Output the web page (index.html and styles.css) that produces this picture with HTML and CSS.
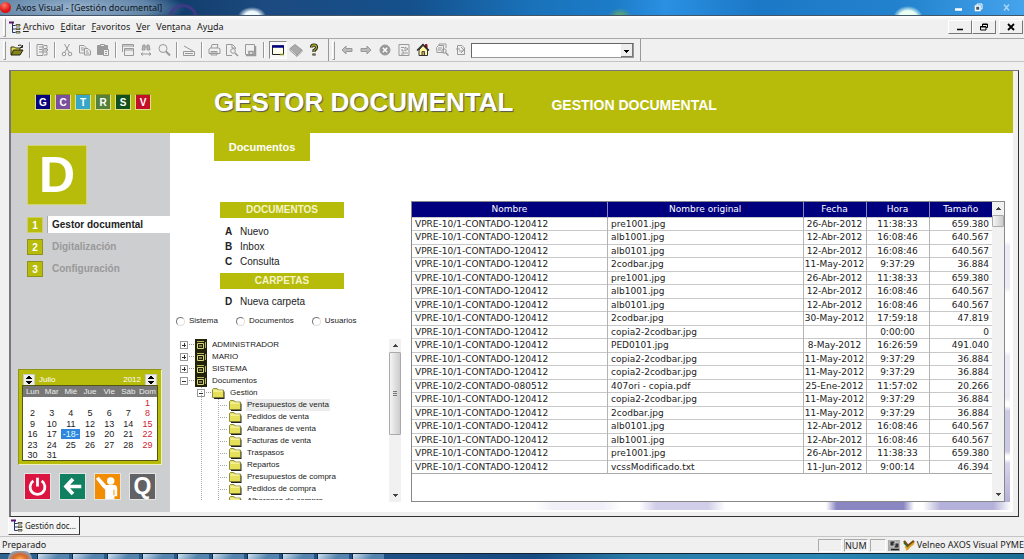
FILE: index.html
```
<!DOCTYPE html>
<html lang="es">
<head>
<meta charset="utf-8">
<title>Axos Visual - [Gestión documental]</title>
<link rel="stylesheet" href="styles.css">
</head>
<body>
<svg class="defs" width="0" height="0" aria-hidden="true">
  <symbol id="app-tree" viewBox="0 0 13 13"><path d="M1 1.500h5" stroke="#5a1070" stroke-width="2"/><path d="M4.500 2v9.500h3M4.500 4.500h3M4.500 8h3" stroke="#24346e" fill="none"/><path d="M8 3.500h4v1.500H8zM8 7h4v1.500H8zM8 10.500h4V12H8z" fill="#f4e98c" stroke="#222" stroke-width=".7"/></symbol>
  <symbol id="cabinet" viewBox="0 0 12 12"><path d="M0 0h12v12H0z" fill="#22220c"/><path d="M2.500 4.500h6v5h-6zM4 7h3" fill="none" stroke="#d8d87c"/><path d="M2 2.500h7M10.500 3v6" fill="none" stroke="#b8b860"/></symbol>
  <symbol id="folder" viewBox="0 0 13 11"><path d="M2 2.500h4l1 1h5.500V11H2z" fill="#222"/><path d="M.5 1.500L1.500.500h3.500l1 1.500h5.500V9.500H.5z" fill="#e6e05a" stroke="#77772a" stroke-width=".8"/><path d="M1.500 3h9" stroke="#ffffc0"/></symbol>
</svg>

<header class="titlebar">
  <span class="app-dot"></span>
  <h1 class="titlebar-text">Axos Visual - [Gestión documental]</h1>
  <div class="aero-buttons">
    <button type="button" aria-label="Minimizar"><svg width="9" height="9" viewBox="0 0 9 9"><path d="M1 6.500h7" stroke="#fff" stroke-width="2.500"/></svg></button>
    <button type="button" aria-label="Restaurar"><svg width="9" height="9" viewBox="0 0 9 9"><path d="M3 2V1h5v5H7" fill="none" stroke="#fff"/><path d="M1.500 3h4.500v4.500H1.500z" fill="#456" stroke="#fff" stroke-width="1.500"/></svg></button>
    <button type="button" aria-label="Cerrar"><svg width="9" height="9" viewBox="0 0 9 9"><path d="M2 1.500l5 6M7 1.500l-5 6" stroke="#a8d4f4" stroke-width="1.500"/></svg></button>
  </div>
</header>

<nav class="menubar" aria-label="Menú principal">
  <span class="grip"></span>
  <svg class="menu-logo" width="13" height="13"><use href="#app-tree"/></svg>
  <button type="button"><u>A</u>rchivo</button>
  <button type="button"><u>E</u>ditar</button>
  <button type="button"><u>F</u>avoritos</button>
  <button type="button"><u>V</u>er</button>
  <button type="button">Ven<u>t</u>ana</button>
  <button type="button">Ay<u>u</u>da</button>
  <div class="mdi-buttons">
    <button type="button" aria-label="Minimizar ventana"><svg width="10" height="8" viewBox="0 0 10 8"><path d="M2 6.500h6" stroke="#000" stroke-width="1.500"/></svg></button>
    <button type="button" aria-label="Restaurar ventana"><svg width="10" height="8" viewBox="0 0 10 8"><path d="M3.500 3V1h5v3.500H7M3.500 1.500h5M1.500 3.500H7V7H1.500zM1.500 4H7" fill="none" stroke="#000"/></svg></button>
    <button type="button" aria-label="Cerrar ventana"><svg width="10" height="8" viewBox="0 0 10 8"><path d="M2 1l6 6M8 1L2 7" stroke="#000" stroke-width="1.800"/></svg></button>
  </div>
</nav>

<div class="toolbar" role="toolbar" aria-label="Herramientas">
  <div class="tool-group tool-main">
    <span class="grip"></span>
    <button type="button" aria-label="Abrir"><svg viewBox="0 0 14 14"><path d="M1 11.500V4h3.500l1 1H10v2" fill="#e8e060" stroke="#33330a"/><path d="M1 12l2.500-5H13l-3 5z" fill="#85851c" stroke="#22220a"/><path d="M8 2.500q3-2 4 1.500M12.500 2v2.500H10" fill="none" stroke="#222"/></svg></button>
    <span class="sep"></span>
    <button type="button" aria-label="Árbol"><svg viewBox="0 0 14 14"><path d="M2 1.500h6v11H2zM4 4h5M4 6.500h3M4 9h5M9 2.500h3v3H9M9 9h3v3H9M7 7h6M11 5l2 2-2 2"/></svg></button>
    <span class="sep"></span>
    <button type="button" aria-label="Cortar"><svg viewBox="0 0 14 14"><path d="M4.500 1l4.500 8M9.500 1L5 9"/><circle cx="4" cy="11" r="1.800"/><circle cx="10" cy="11" r="1.800"/></svg></button>
    <button type="button" aria-label="Copiar"><svg viewBox="0 0 14 14"><path d="M1.500 2.500H6l2 2V10H1.500zM3 5h3M3 7h3"/><path d="M6.500 5.500H10l2.500 2.500v4h-6z" fill="#eee"/><path d="M8 8h2M8 10h3"/></svg></button>
    <button type="button" aria-label="Pegar"><svg viewBox="0 0 14 14"><path d="M1.500 2.500h10v9h-10z" fill="#999"/><path d="M4.500 1.500h4v2h-4z" fill="#eee"/><path d="M7.500 6.500h5v6h-5zM9 8.500h2M9 10.500h2" fill="#eee"/></svg></button>
    <span class="sep"></span>
    <button type="button" aria-label="Ventanas"><svg viewBox="0 0 14 14"><path d="M1.500 9V1.500h11V4M1.500 3h11"/><path d="M3.500 5.500h9v7h-9zM3.500 7h9" fill="#eee"/></svg></button>
    <button type="button" aria-label="Buscar"><svg viewBox="0 0 14 14"><path d="M3 7l1-5h2v5H3M8 7V2h2l1 5zM6 4h2" fill="#bbb"/><path d="M2 11h10M4 9.500L2 11l2 1.500M10 9.500l2 1.500-2 1.500"/></svg></button>
    <button type="button" aria-label="Zoom"><svg viewBox="0 0 14 14"><circle cx="6" cy="5.500" r="4"/><path d="M9 8.500l4 4" stroke-width="2"/></svg></button>
    <span class="sep"></span>
    <button type="button" aria-label="Escáner"><svg viewBox="0 0 14 14"><path d="M1.500 8.500h11v4h-11zM3 10.500h8M2 3l9 5"/></svg></button>
    <span class="sep"></span>
    <button type="button" aria-label="Imprimir"><svg viewBox="0 0 14 14"><path d="M4 5l1-3.500h6L10 5M2 6l1.500-1H12l1 1v4.500H2zM4 8.500h6V12H4zM5 10h4"/></svg></button>
    <button type="button" aria-label="Vista previa"><svg viewBox="0 0 14 14"><path d="M7 12.500H1.500v-11h6l3 3V6M7 2v3h3"/><circle cx="8" cy="8" r="2.300"/><path d="M10 10l3 3" stroke-width="1.600"/></svg></button>
    <button type="button" aria-label="Configurar página"><svg viewBox="0 0 14 14"><path d="M2.500 1.500h9v10h-9z"/><path d="M3 12.500h9.500V3M6 8.500h4v3H6z" fill="none" stroke-width="1.500"/></svg></button>
    <span class="sep double"></span>
    <button type="button" class="pressed" aria-label="Ventana" aria-pressed="true"><svg viewBox="0 0 14 14"><path d="M1.500 3h11v8.500h-11z" fill="#fffff0" stroke="#222"/><path d="M1 3.500h12" stroke="#000080" stroke-width="2.500"/><path d="M9 11.500h4" stroke="#8a8a10" stroke-width="1.500"/></svg></button>
    <button type="button" aria-label="Libro"><svg viewBox="0 0 14 14"><path d="M1 5.500L6 1.500l7 5.500-5 5z" fill="#aaa"/><path d="M1 5.500v2l7 6 5-5V7M8 12v1"/></svg></button>
    <button type="button" aria-label="Ayuda"><svg viewBox="0 0 14 14"><path d="M4.500 4.500q0-2.500 2.500-2.500t2.500 2.500q0 1.500-2.500 3V9M7 10.500v2" fill="none" stroke="#222" stroke-width="3.200"/><path d="M4.500 4.500q0-2.500 2.500-2.500t2.500 2.500q0 1.500-2.500 3V9M7 11v1" fill="none" stroke="#a8a820" stroke-width="1.300"/></svg></button>
  </div>
  <div class="tool-group tool-nav">
    <span class="grip"></span>
    <button type="button" aria-label="Atrás"><svg viewBox="0 0 14 14"><path d="M2 7l4-4v2.500h6v3H6V11z" fill="#bbb"/></svg></button>
    <button type="button" aria-label="Adelante"><svg viewBox="0 0 14 14"><path d="M12 7L8 3v2.500H2v3h6V11z" fill="#bbb"/></svg></button>
    <button type="button" aria-label="Detener"><svg viewBox="0 0 14 14"><circle cx="7" cy="7" r="5" fill="#999"/><path d="M4.800 4.800l4.400 4.400M9.200 4.800L4.800 9.200" stroke="#fff" stroke-width="1.500"/></svg></button>
    <button type="button" aria-label="Actualizar"><svg viewBox="0 0 14 14"><path d="M2 1.500h10v11H2zM4 4.500h3M4 7h2v3h5M8 4v4l3-2zM4 11h3"/></svg></button>
    <button type="button" aria-label="Inicio"><svg viewBox="0 0 14 14"><path d="M9.500 4V1.500H11V5" fill="#a22" stroke="#811"/><path d="M3 7v5.500h8.500V7L7 2.500z" fill="#fff7a0" stroke="#333"/><path d="M1 7.500l6-6 6 6" fill="none" stroke="#222" stroke-width="1.300"/><path d="M6 12V8.500h2.500V12" fill="#c9a45a" stroke="#444"/></svg></button>
    <button type="button" aria-label="Buscar en carpetas"><svg viewBox="0 0 14 14"><path d="M1.500 4.500l2-2h5v7H2zM4 2V1h7v4M3 5h4M3 7h3"/><circle cx="9" cy="8" r="2.200"/><path d="M10.500 9.500l3 3" stroke-width="1.500"/></svg></button>
    <button type="button" aria-label="Documento"><svg viewBox="0 0 14 14"><path d="M3.500 2.500H8l2.500 2.500v6.500h-7zM2 6h4M5 8h4M7 4l3 3-3 3"/></svg></button>
    <select class="address" aria-label="Dirección"><option></option></select>
  </div>
</div>

<main class="mdi">
  <div class="client">
    <header class="brand">
      <div class="letters">
        <button type="button" class="l-g">G</button><button type="button" class="l-c">C</button><button type="button" class="l-t">T</button><button type="button" class="l-r">R</button><button type="button" class="l-s">S</button><button type="button" class="l-v">V</button>
      </div>
      <h2 class="brand-title">GESTOR DOCUMENTAL</h2>
      <p class="brand-sub">GESTION DOCUMENTAL</p>
    </header>
    <div class="body">
      <aside class="sidebar">
        <div class="big-d">D</div>
        <nav class="steps" aria-label="Secciones">
          <a href="#gestor" class="step active"><b>1</b><span>Gestor documental</span></a>
          <a href="#digitalizacion" class="step"><b>2</b><span>Digitalización</span></a>
          <a href="#configuracion" class="step"><b>3</b><span>Configuración</span></a>
        </nav>
        <section class="calendar" aria-label="Calendario">
          <div class="cal-head">
            <button type="button" class="spin" aria-label="Cambiar mes"></button>
            <span>Julio</span><span class="cal-year">2012</span>
            <button type="button" class="spin" aria-label="Cambiar año"></button>
          </div>
          <table class="cal-grid">
            <thead><tr><th>Lun</th><th>Mar</th><th>Mié</th><th>Jue</th><th>Vie</th><th>Sáb</th><th>Dom</th></tr></thead>
            <tbody>
              <tr><td></td><td></td><td></td><td></td><td></td><td></td><td>1</td></tr>
              <tr><td>2</td><td>3</td><td>4</td><td>5</td><td>6</td><td>7</td><td>8</td></tr>
              <tr><td>9</td><td>10</td><td>11</td><td>12</td><td>13</td><td>14</td><td>15</td></tr>
              <tr><td>16</td><td>17</td><td class="today">-18-</td><td>19</td><td>20</td><td>21</td><td>22</td></tr>
              <tr><td>23</td><td>24</td><td>25</td><td>26</td><td>27</td><td>28</td><td>29</td></tr>
              <tr><td>30</td><td>31</td><td></td><td></td><td></td><td></td><td></td></tr>
            </tbody>
          </table>
        </section>
        <div class="quick">
          <button type="button" class="q-power" aria-label="Salir"><svg viewBox="0 0 27 27"><path d="M9 7.500a8 8 0 1 0 9 0" fill="none" stroke="#fff" stroke-width="3"/><path d="M13.500 4v9.500" stroke="#fff" stroke-width="3"/></svg></button>
          <button type="button" class="q-back" aria-label="Volver"><svg viewBox="0 0 27 27"><path d="M14 5.500L6.500 13.500l7.500 8M7 13.500h16" fill="none" stroke="#fff" stroke-width="4"/></svg></button>
          <button type="button" class="q-user" aria-label="Usuario"><svg viewBox="0 0 27 27"><circle cx="17" cy="7.500" r="4" fill="#fff"/><path d="M1 5l3-2 8 9h9q3 0 3 4v8h-3v3H11v-10L8 14z" fill="#fff"/><path d="M20.500 17v6" stroke="#f28c00"/></svg></button>
          <button type="button" class="q-q" aria-label="Consultas">Q</button>
        </div>
      </aside>

      <div class="work">
        <div class="tabs"><button type="button" class="tab">Documentos</button></div>
        <div class="panes">
          <section class="left-pane">
            <h3 class="bar">DOCUMENTOS</h3>
            <ul class="actions">
              <li><a href="#nuevo"><b>A</b>Nuevo</a></li>
              <li><a href="#inbox"><b>B</b>Inbox</a></li>
              <li><a href="#consulta"><b>C</b>Consulta</a></li>
            </ul>
            <h3 class="bar">CARPETAS</h3>
            <ul class="actions single">
              <li><a href="#carpeta"><b>D</b>Nueva carpeta</a></li>
            </ul>
            <div class="radios">
              <label><input type="radio" name="scope">Sistema</label>
              <label><input type="radio" name="scope">Documentos</label>
              <label><input type="radio" name="scope">Usuarios</label>
            </div>
            <div class="tree-box">
              <ul class="tree">
                <li><i class="box plus"></i><svg class="cab"><use href="#cabinet"/></svg><span>ADMINISTRADOR</span></li>
                <li><i class="box plus"></i><svg class="cab"><use href="#cabinet"/></svg><span>MARIO</span></li>
                <li><i class="box plus"></i><svg class="cab"><use href="#cabinet"/></svg><span>SISTEMA</span></li>
                <li><i class="box"></i><svg class="cab"><use href="#cabinet"/></svg><span>Documentos</span></li>
                <li class="branch"><i class="box"></i><svg class="fold"><use href="#folder"/></svg><span>Gestión</span></li>
                <li class="leaf"><svg class="fold"><use href="#folder"/></svg><span class="sel">Presupuestos de venta</span></li>
                <li class="leaf"><svg class="fold"><use href="#folder"/></svg><span>Pedidos de venta</span></li>
                <li class="leaf"><svg class="fold"><use href="#folder"/></svg><span>Albaranes de venta</span></li>
                <li class="leaf"><svg class="fold"><use href="#folder"/></svg><span>Facturas de venta</span></li>
                <li class="leaf"><svg class="fold"><use href="#folder"/></svg><span>Traspasos</span></li>
                <li class="leaf"><svg class="fold"><use href="#folder"/></svg><span>Repartos</span></li>
                <li class="leaf"><svg class="fold"><use href="#folder"/></svg><span>Presupuestos de compra</span></li>
                <li class="leaf"><svg class="fold"><use href="#folder"/></svg><span>Pedidos de compra</span></li>
                <li class="leaf"><svg class="fold"><use href="#folder"/></svg><span>Albaranes de compra</span></li>
              </ul>
              <div class="scroll"><i class="up"></i><i class="thumb thumb-tree"></i><i class="down"></i></div>
            </div>
          </section>

          <section class="grid-box">
            <div class="grid-scroll">
              <table class="files">
                <colgroup><col><col><col class="c-date"><col class="c-time"><col class="c-size"></colgroup>
                <thead><tr><th>Nombre</th><th>Nombre original</th><th>Fecha</th><th>Hora</th><th>Tamaño</th></tr></thead>
                <tbody>
                  <tr><td>VPRE-10/1-CONTADO-120412</td><td>pre1001.jpg</td><td>26-Abr-2012</td><td>11:38:33</td><td>659.380</td></tr>
                  <tr><td>VPRE-10/1-CONTADO-120412</td><td>alb1001.jpg</td><td>12-Abr-2012</td><td>16:08:46</td><td>640.567</td></tr>
                  <tr><td>VPRE-10/1-CONTADO-120412</td><td>alb0101.jpg</td><td>12-Abr-2012</td><td>16:08:46</td><td>640.567</td></tr>
                  <tr><td>VPRE-10/1-CONTADO-120412</td><td>2codbar.jpg</td><td>11-May-2012</td><td>9:37:29</td><td>36.884</td></tr>
                  <tr><td>VPRE-10/1-CONTADO-120412</td><td>pre1001.jpg</td><td>26-Abr-2012</td><td>11:38:33</td><td>659.380</td></tr>
                  <tr><td>VPRE-10/1-CONTADO-120412</td><td>alb1001.jpg</td><td>12-Abr-2012</td><td>16:08:46</td><td>640.567</td></tr>
                  <tr><td>VPRE-10/1-CONTADO-120412</td><td>alb0101.jpg</td><td>12-Abr-2012</td><td>16:08:46</td><td>640.567</td></tr>
                  <tr><td>VPRE-10/1-CONTADO-120412</td><td>2codbar.jpg</td><td>30-May-2012</td><td>17:59:18</td><td>47.819</td></tr>
                  <tr><td>VPRE-10/1-CONTADO-120412</td><td>copia2-2codbar.jpg</td><td></td><td>0:00:00</td><td>0</td></tr>
                  <tr><td>VPRE-10/1-CONTADO-120412</td><td>PED0101.jpg</td><td>8-May-2012</td><td>16:26:59</td><td>491.040</td></tr>
                  <tr><td>VPRE-10/1-CONTADO-120412</td><td>copia2-2codbar.jpg</td><td>11-May-2012</td><td>9:37:29</td><td>36.884</td></tr>
                  <tr><td>VPRE-10/1-CONTADO-120412</td><td>copia2-2codbar.jpg</td><td>11-May-2012</td><td>9:37:29</td><td>36.884</td></tr>
                  <tr><td>VPRE-10/2-CONTADO-080512</td><td>407ori - copia.pdf</td><td>25-Ene-2012</td><td>11:57:02</td><td>20.266</td></tr>
                  <tr><td>VPRE-10/1-CONTADO-120412</td><td>copia2-2codbar.jpg</td><td>11-May-2012</td><td>9:37:29</td><td>36.884</td></tr>
                  <tr><td>VPRE-10/1-CONTADO-120412</td><td>2codbar.jpg</td><td>11-May-2012</td><td>9:37:29</td><td>36.884</td></tr>
                  <tr><td>VPRE-10/1-CONTADO-120412</td><td>alb0101.jpg</td><td>12-Abr-2012</td><td>16:08:46</td><td>640.567</td></tr>
                  <tr><td>VPRE-10/1-CONTADO-120412</td><td>alb1001.jpg</td><td>12-Abr-2012</td><td>16:08:46</td><td>640.567</td></tr>
                  <tr><td>VPRE-10/1-CONTADO-120412</td><td>pre1001.jpg</td><td>26-Abr-2012</td><td>11:38:33</td><td>659.380</td></tr>
                  <tr><td>VPRE-10/1-CONTADO-120412</td><td>vcssModificado.txt</td><td>11-Jun-2012</td><td>9:00:14</td><td>46.394</td></tr>
                </tbody>
              </table>
            </div>
            <div class="scroll"><i class="up"></i><i class="thumb"></i><i class="down"></i></div>
          </section>
        </div>
      </div>
    </div>
  </div>
</main>

<div class="doc-tabs">
  <button type="button" class="doc-tab"><svg width="13" height="13"><use href="#app-tree"/></svg>Gestión doc...</button>
</div>

<footer class="status">
  <span class="ready">Preparado</span>
  <span class="cell"></span><span class="cell">NUM</span><span class="cell"></span>
  <svg width="13" height="13" viewBox="0 0 13 13"><path d="M0 1h12v11H0z" fill="#aaa"/><path d="M2 2h5v5H2zM6 4h5v5H6z" fill="#333" stroke="#ddd" stroke-width=".7"/><path d="M3 10.500h8" stroke="#222" stroke-width="1.500"/></svg>
  <svg width="12" height="13" viewBox="0 0 12 13"><path d="M1 2l4 5 6-5" fill="none" stroke="#7a4a12" stroke-width="2.500"/><path d="M2 8l3 1 6-5M3 11l3-2" fill="none" stroke="#e0a020" stroke-width="2"/><path d="M1 4l4 4" stroke="#267026" stroke-width="1.500"/></svg>
  <span class="product">Velneo AXOS Visual PYME</span>
</footer>
<div class="taskbar"><span class="orb"></span><i></i><i></i><i></i><i></i><i></i><i></i><i></i><i></i><i></i><i></i></div>
</body>
</html>
```
FILE: styles.css
```
* { box-sizing: border-box; }
html, body { margin: 0; }
body {
  min-height: 100vh;
  display: flex;
  flex-direction: column;
  background: #f0f0f0;
  color: #222;
  font: 10px/12px "Noto Sans", "Open Sans", sans-serif;
  overflow-x: hidden;
}
button { font: inherit; color: inherit; border: 0; padding: 0; margin: 0; background: none; }
h1, h2, h3, p, ul { margin: 0; padding: 0; font-weight: normal; }
ul { list-style: none; }
a { color: inherit; text-decoration: none; }
.defs { position: absolute; }

/* Window frame */
.titlebar {
  height: 16px;
  display: flex;
  align-items: center;
  border-bottom: 1px solid #456;
  background:
    radial-gradient(ellipse 14px 9px at 252px 16px, #eefaff 50%, transparent),
    radial-gradient(ellipse 15px 12px at 908px 18px, #e8fff4 60%, transparent),
    radial-gradient(ellipse 12px 8px at 620px 16px, #6fae62, transparent),
    radial-gradient(circle 17px at 183px 19px, transparent 11px, #46388a 13px, transparent 16px),
    radial-gradient(ellipse 110px 22px at 75px 8px, rgba(165, 190, 215, .9), rgba(125, 158, 190, .7) 70%, transparent),
    linear-gradient(90deg, #34587c, #123e6e 18%, #1d4a80 26%, #14508c 40%, #1a72ba 52%, #1c7cc8 60%, #2b90e2 65%, #1b78c6 74%, #2382cd 88%, #45a4ec);
}
.app-dot { width: 11px; height: 11px; border-radius: 50%; background: radial-gradient(circle at 40% 30%, #ff7a6a, #e01010 60%); }
.titlebar-text { flex: 1; padding-left: 5px; font-size: 9px; line-height: 12px; color: #10161c; }
.aero-buttons { display: flex; gap: 11px; padding-right: 13px; }
.aero-buttons button { height: 12px; }
.aero-buttons button:last-child { padding-left: 8px; }
.menubar, .toolbar { display: flex; align-items: center; border-bottom: 1px solid #a8a8a8; }
.menubar { height: 23px; padding-left: 3px; background: linear-gradient(#fff, #f0f0f0 20%); gap: 6px; }
.menubar > button { font-size: 9px; }
.menubar .grip { margin-right: -4px; }
.menu-logo { margin-right: -4px; }
.grip { width: 3px; height: 19px; border: 1px solid; border-color: #fff #999 #999 #fff; }
.mdi-buttons { margin-left: auto; display: flex; padding-right: 1px; }
.mdi-buttons button { width: 24px; height: 14px; border: 1px solid; border-color: #fff #777 #777 #fff; display: flex; align-items: center; justify-content: center; }
.mdi-buttons button:last-child { margin-left: 3px; }
.toolbar { height: 23px; padding-left: 3px; border-bottom-color: #c4c4c4; }
.tool-group { display: flex; align-items: center; height: 22px; }
.tool-group button { width: 18px; height: 18px; display: flex; align-items: center; justify-content: center; }
.tool-group svg { width: 14px; height: 14px; fill: none; stroke: #999; }
.tool-main { padding-right: 5px; border-right: 1px solid #999; }
.tool-main .grip { margin-right: 2px; }
.tool-nav { gap: 1px; padding: 0 6px 0 3px; border-right: 1px solid #999; }
.tool-nav .grip { margin-right: 2px; }
.sep { width: 2px; height: 16px; margin: 0 2px 0 3px; border-left: 1px solid #999; border-right: 1px solid #fff; }
.sep.double { margin: 0 4px; }
.pressed { border: 1px solid; border-color: #888 #fff #fff #888; background: #f8f8f8; }
.address {
  width: 163px;
  height: 15px;
  appearance: none;
  border: 1px solid;
  border-color: #666 #999 #999 #666;
  border-radius: 0;
  background:
    linear-gradient(#000, #000) right 4px top 6px / 5px 1px no-repeat,
    linear-gradient(#000, #000) right 5px top 7px / 3px 1px no-repeat,
    linear-gradient(#000, #000) right 6px top 8px / 1px 1px no-repeat,
    linear-gradient(#777, #777) right bottom / 12px 1px no-repeat,
    linear-gradient(#777, #777) right / 1px 100% no-repeat,
    linear-gradient(#eee, #eee) right / 12px 100% no-repeat,
    #fff;
}

/* Document window */
.mdi { flex: 1; display: flex; padding: 8px 5px 0 9px; }
.client {
  flex: 1;
  display: flex;
  flex-direction: column;
  border-top: 1px solid #777;
  border-left: 2px solid #777;
  border-right: 1px solid #333;
  border-bottom: 1px solid #333;
  padding: 0 5px 4px 0;
  font-family: "Liberation Sans", Arial, sans-serif;
}
.brand { height: 62px; display: flex; align-items: center; background: #b7bb09; color: #fff; font-weight: bold; }
.letters { display: flex; gap: 4px; width: 203px; padding-left: 24px; }
.letters button { width: 16px; height: 16px; border: 1px solid #dde08a; border-top-color: #8f930a; font: bold 10px/13px "Liberation Sans", Arial, sans-serif; }
.l-g { background: #04047c; }
.l-c { background: #7b4fa0; }
.l-t { background: #38a6c8; }
.l-r { background: #55803c; }
.l-s { background: #12501c; }
.l-v { background: #c40f28; }
.brand-title { font-size: 26px; line-height: 30px; font-weight: bold; text-shadow: 1px 1px 1px #555; margin-right: 38px; }
.brand-sub { font-size: 14px; line-height: 16px; font-weight: bold; padding-top: 6px; }
.body { flex: 1; display: flex; }
.sidebar { width: 159px; padding: 12px 0 12px; background: #cdced0; display: flex; flex-direction: column; }
.big-d { width: 60px; height: 60px; margin-left: 16px; background: #b7bb09; border: 1px solid #d2d470; color: #fff; font: bold 50px/58px "Liberation Sans", Arial, sans-serif; text-align: center; }
.steps { display: grid; gap: 5px; padding: 11px 0 0 16px; font-weight: bold; }
.step { display: flex; align-items: center; gap: 4px; height: 17px; color: #999; }
.step b { width: 16px; height: 16px; line-height: 15px; text-align: center; color: #fff; background: #b7bb09; border: 1px solid #90931a; }
.step span { flex: 1; padding-left: 5px; line-height: 17px; }
.step.active { color: #222; }
.step.active b { border-color: #cdd060; }
.step.active span { background: #fff; border-left: 1px solid #aaa; padding-left: 4px; }
.calendar { margin: auto 8px 8px 7px; padding: 3px 4px 4px; background: #b7bb09; border: 1px solid #90931a; border-right: 1px solid #eef0c0; border-bottom: 1px solid #eef0c0; }
.cal-head { display: flex; align-items: center; gap: 4px; height: 13px; color: #fff; font-size: 8px; }
.cal-year { margin-left: auto; }
.spin {
  width: 12px;
  height: 12px;
  border: 1px solid #ccc;
  background:
    linear-gradient(#000, #000) 4px 1px / 2px 1px no-repeat,
    linear-gradient(#000, #000) 3px 2px / 4px 1px no-repeat,
    linear-gradient(#000, #000) 2px 3px / 6px 1px no-repeat,
    linear-gradient(#000, #000) 2px 6px / 6px 1px no-repeat,
    linear-gradient(#000, #000) 3px 7px / 4px 1px no-repeat,
    linear-gradient(#000, #000) 4px 8px / 2px 1px no-repeat,
    #eee;
}
.cal-grid { width: 100%; border-collapse: collapse; table-layout: fixed; background: #fff; outline: 1px solid #55560f; font-size: 9px; line-height: 10px; text-align: center; }
.cal-grid th { padding: 0; font-size: 8px; font-weight: normal; background: #777; color: #eee; height: 11px; }
.cal-grid td { padding: 0; height: 10px; }
.cal-grid tr:nth-child(odd) td { height: 11px; }
.cal-grid tr td:last-child { color: #cf2233; }
.cal-grid .today { background: #2f86dc; color: #dff; }
.quick { display: flex; gap: 8px; padding-left: 13px; }
.quick button { width: 27px; height: 27px; border: 1px solid #e4e4e4; color: #fff; }
.quick svg { display: block; width: 100%; height: 100%; }
.q-power { background: #dc1440; }
.q-back { background: #108060; }
.q-user { background: #f28c00; }
.quick .q-q { background: #626264; font: bold 23px/25px "Liberation Sans", Arial, sans-serif; }

/* Work area */
.work {
  flex: 1;
  display: flex;
  flex-direction: column;
  min-width: 0;
  padding-bottom: 10px;
  background:
    linear-gradient(90deg, transparent, #f1f0f8 20%, #f1f0f8 80%, transparent) right 392px bottom 2px / 86px 8px no-repeat,
    linear-gradient(90deg, transparent, #d0cee8 20%, #d0cee8 80%, transparent) right 288px bottom 2px / 86px 8px no-repeat,
    linear-gradient(90deg, transparent, #8a86c2 12%, #8a86c2 88%, transparent) right 99px bottom 2px / 88px 8px no-repeat,
    linear-gradient(90deg, transparent, #b4b1da 20%, #b4b1da 80%, transparent) right 2px bottom 2px / 88px 8px no-repeat,
    linear-gradient(transparent, #d6d4ec 10%, #b4b1da) right 3px bottom 10px / 6px 43px no-repeat,
    linear-gradient(transparent, #cbcae4 10%, #cbcae4 90%, transparent) right 3px bottom 56px / 6px 50px no-repeat,
    linear-gradient(transparent, #ebeaf6 10%, #ebeaf6 90%, transparent) right 3px bottom 109px / 6px 52px no-repeat,
    linear-gradient(transparent, #ebeaf6 10%, #ebeaf6 90%, transparent) right 3px top 108px / 6px 52px no-repeat,
    #fff;
}
.tabs { padding-left: 44px; }
.tab { width: 96px; height: 28px; background: #b7bb09; color: #fff; font: bold 11px/26px "Liberation Sans", Arial, sans-serif; }
.panes { flex: 1; display: flex; padding: 40px 8px 0 0; }
.left-pane { width: 241px; padding-right: 10px; display: flex; flex-direction: column; }
.bar { width: 124px; height: 16px; margin-left: 50px; margin-top: 1px; background: #b7bb09; color: #f4f4c8; font: bold 10px/16px "Liberation Sans", Arial, sans-serif; text-align: center; }
.actions { padding: 6px 0 3px 55px; line-height: 15px; }
.actions b { display: inline-block; width: 15px; }
.actions.single { padding: 5px 0 6px 55px; }
.radios { display: flex; gap: 18px; padding-left: 6px; font-size: 8px; line-height: 12px; height: 12px; }
.radios label { display: flex; align-items: center; gap: 4px; }
.radios input { appearance: none; width: 9px; height: 9px; margin: 0; border-radius: 50%; border: 1px solid; border-color: #777 #ddd #ddd #777; background: #fff; }
.tree-box { flex: 1; display: flex; margin-top: 12px; }
.tree { flex: 1; overflow: hidden; height: 161px; font-size: 8px; line-height: 12px; padding-left: 10px; }
.tree li { display: flex; align-items: center; height: 12px; }
.tree span { margin-left: 4px; padding: 0 1px; white-space: nowrap; }
.tree .sel { background: #ececec; }
.box { flex: none; width: 8px; height: 8px; border: 1px solid #999; background: linear-gradient(#333, #333) center / 4px 1px no-repeat; }
.box.plus { background: linear-gradient(#333, #333) center / 4px 1px no-repeat, linear-gradient(#333, #333) center / 1px 4px no-repeat; }
.box::after { content: ""; display: block; width: 5px; margin: 2px 0 0 8px; border-top: 1px dotted #999; }
.cab { flex: none; width: 12px; height: 12px; margin-left: 7px; }
.fold { flex: none; width: 13px; height: 11px; }
.branch { padding-left: 17px; background: repeating-linear-gradient(#aaa 0 1px, transparent 1px 2px) 21px 0 / 1px 100% no-repeat; }
.branch .fold { margin-left: 7px; }
.leaf {
  padding-left: 49px;
  background:
    repeating-linear-gradient(#aaa 0 1px, transparent 1px 2px) 21px 0 / 1px 100% no-repeat,
    repeating-linear-gradient(#aaa 0 1px, transparent 1px 2px) 38px 0 / 1px 100% no-repeat,
    repeating-linear-gradient(90deg, #aaa 0 1px, transparent 1px 2px) 38px 6px / 10px 1px no-repeat;
}
.scroll { width: 12px; background: #f1f1f1; display: flex; flex-direction: column; }
.up, .down { height: 13px; flex: none; background: linear-gradient(#444, #444) 4px 7px / 5px 1px no-repeat, linear-gradient(#444, #444) 5px 6px / 3px 1px no-repeat, linear-gradient(#444, #444) 6px 5px / 1px 1px no-repeat; }
.down { margin-top: auto; background: linear-gradient(#444, #444) 4px 5px / 5px 1px no-repeat, linear-gradient(#444, #444) 5px 6px / 3px 1px no-repeat, linear-gradient(#444, #444) 6px 7px / 1px 1px no-repeat; }
.thumb { height: 12px; flex: none; border: 1px solid #aaa; border-radius: 1px; background: linear-gradient(90deg, #f4f4f4, #ccc); }
.thumb-tree { height: 83px; background: repeating-linear-gradient(#777 0 1px, transparent 1px 2px) center / 4px 5px no-repeat, linear-gradient(90deg, #f4f4f4, #ccc); }
.grid-box { flex: 1; min-width: 0; display: flex; border: 1px solid #888; background: #fff; }
.grid-scroll { flex: 1; min-width: 0; }
.files { width: 100%; border-collapse: collapse; table-layout: fixed; font: 9px/12px "DejaVu Sans", Verdana, sans-serif; color: #222; border-bottom: 1px solid #aaa; }
.c-date, .c-time, .c-size { width: 63px; }
.files th { height: 15px; padding: 0; font-weight: normal; color: #fff; background: #00007e; border-right: 1px solid #8888b8; }
.files td { height: 13px; padding: 0 3px; white-space: nowrap; border-top: 1px solid #c8c8c8; border-right: 1px solid #b4b4b4; }
.files tbody tr:nth-child(even) td { height: 14px; }
.files td:nth-child(3), .files td:nth-child(4) { text-align: center; padding: 0; }
.files td:last-child { text-align: right; }
.files th:last-child, .files td:last-child { border-right: 0; }

/* Bottom bars */
.doc-tabs { height: 20px; padding-left: 8px; border-bottom: 1px solid #c4c4c4; }
.doc-tab { height: 18px; display: flex; align-items: center; gap: 2px; padding: 0 3px 0 1px; font-size: 8px; white-space: nowrap; border-right: 1px solid #333; border-bottom: 1px solid #555; border-left: 1px solid #fff; background: #f6f6f6; }
.doc-tab svg { flex: none; }
.status { height: 16px; display: flex; align-items: center; gap: 2px; padding: 0 0 0 2px; font-size: 9px; }
.ready { flex: 1; }
.cell { width: 24px; height: 13px; line-height: 12px; text-align: center; border: 1px solid; border-color: #aaa #fff #fff #aaa; }
.cell + .cell + .cell { width: 16px; }
.taskbar { height: 6px; display: flex; gap: 3px; padding-left: 8px; border-top: 1px solid #123; background: linear-gradient(90deg, #2f6390, #1d4f84 40%, #164a80 52%, #2a7ca8 62%, #2a86b4 80%, #1c6c94); }
.taskbar i { width: 32px; background: linear-gradient(135deg, #cfe0ee, #5585ae 60%); border-left: 1px solid #0c2c4c; }
.orb { width: 24px; height: 8px; margin: -3px 2px 0 0; border-radius: 12px 12px 0 0; background: radial-gradient(ellipse at 50% 100%, #f5b040, #d8642c 40%, #7fa8c8 75%); }
```
